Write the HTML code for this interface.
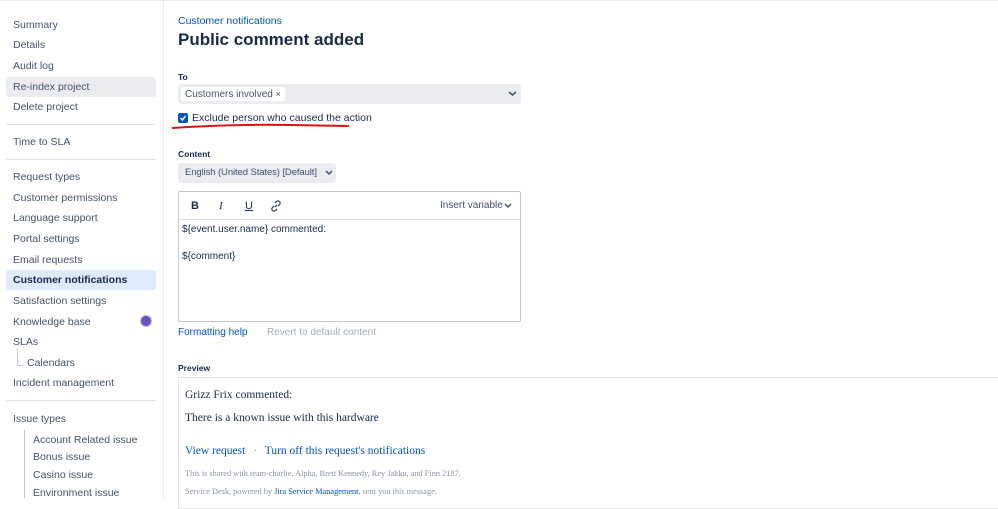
<!DOCTYPE html><html><head><style>
body{margin:0;width:998px;height:498px;overflow:hidden;background:#fff;font-family:"Liberation Sans",sans-serif;color:#42526e;position:relative}
.a{position:absolute;white-space:nowrap}
.nav{font-size:10.5px;color:#42526e;left:13px}
.sel{position:absolute;left:6px;width:150px;height:20px;border-radius:3px}
.hr{position:absolute;left:6px;width:150px;height:1px;background:#dfe1e6}
.lbl{font-size:8.5px;font-weight:bold;color:#172b4d}
.ser{font-family:"Liberation Serif",serif;color:#172b4d}
</style></head><body>
<div style="position:absolute;left:163px;top:0;width:1px;height:498px;background:#ebecf0"></div>
<div style="position:absolute;left:0;top:0;width:998px;height:1px;background:#ebecf0"></div>
<div class="sel" style="top:77px;background:#ebecf0"></div>
<div class="sel" style="top:270px;background:#deebff"></div>
<div class="a nav" style="top:19px">Summary</div>
<div class="a nav" style="top:39px">Details</div>
<div class="a nav" style="top:60px">Audit log</div>
<div class="a nav" style="top:81px">Re-index project</div>
<div class="a nav" style="top:101px">Delete project</div>
<div class="hr" style="top:124px"></div>
<div class="a nav" style="top:136px">Time to SLA</div>
<div class="hr" style="top:159px"></div>
<div class="a nav" style="top:171px">Request types</div>
<div class="a nav" style="top:192px">Customer permissions</div>
<div class="a nav" style="top:212px">Language support</div>
<div class="a nav" style="top:233px">Portal settings</div>
<div class="a nav" style="top:254px">Email requests</div>
<div class="a nav" style="top:274px;font-weight:bold;color:#172b4d">Customer notifications</div>
<div class="a nav" style="top:295px">Satisfaction settings</div>
<div class="a nav" style="top:316px">Knowledge base</div>
<div class="a" style="left:141px;top:316px;width:10px;height:10px;border-radius:50%;background:#6554c0;box-shadow:0 0 0 1px #c0b6f2"></div>
<div class="a nav" style="top:336px">SLAs</div>
<div class="a" style="left:17px;top:349px;width:5px;height:16px;border-left:1px solid #c1c7d0;border-bottom:1px solid #c1c7d0"></div>
<div class="a nav" style="top:357px;left:27px">Calendars</div>
<div class="a nav" style="top:377px">Incident management</div>
<div class="hr" style="top:400px"></div>
<div class="a nav" style="top:413px">Issue types</div>
<div class="a" style="left:24px;top:430px;width:1px;height:68px;background:#c1c7d0"></div>
<div class="a nav" style="top:434px;left:33px">Account Related issue</div>
<div class="a nav" style="top:451px;left:33px">Bonus issue</div>
<div class="a nav" style="top:469px;left:33px">Casino issue</div>
<div class="a nav" style="top:487px;left:33px">Environment issue</div>

<div class="a" style="left:178px;top:15px;font-size:10.5px;color:#0052cc">Customer notifications</div>
<div class="a" style="left:178px;top:30px;font-size:17px;color:#172b4d;font-weight:bold">Public comment added</div>
<div class="a lbl" style="left:178px;top:72px">To</div>
<div class="a" style="left:178px;top:84px;width:343px;height:20px;background:#ebecf0;border-radius:3px"></div>
<div class="a" style="left:181px;top:87px;height:14px;padding:0 4px;background:#fff;border-radius:2px;font-size:10px;line-height:14px;color:#42526e">Customers involved <span style="font-size:9px">×</span></div>
<svg class="a" style="left:508px;top:90px" width="9" height="7"><path d="M1 2l3.5 3L8 2" stroke="#42526e" stroke-width="1.6" fill="none"/></svg>
<div class="a" style="left:178px;top:113px;width:10px;height:10px;background:#0052cc;border-radius:2px"></div>
<svg class="a" style="left:178px;top:113px" width="10" height="10"><path d="M2.5 5l2 2 3-4" stroke="#fff" stroke-width="1.5" fill="none"/></svg>
<div class="a" style="left:192px;top:112px;font-size:10.5px;color:#172b4d">Exclude person who caused the action</div>
<svg class="a" style="left:170px;top:122px" width="190" height="10"><path d="M2 6 Q60 2 120 3 T178 4" stroke="#e01010" stroke-width="2" fill="none"/></svg>
<div class="a lbl" style="left:178px;top:149px">Content</div>
<div class="a" style="left:178px;top:163px;width:158px;height:20px;background:#ebecf0;border-radius:3px;font-size:9.5px;line-height:20px;color:#42526e;letter-spacing:-0.1px"><span style="margin-left:7px">English (United States) [Default]</span></div>
<svg class="a" style="left:325px;top:170px" width="8" height="6"><path d="M1 1l3 3 3-3" stroke="#42526e" stroke-width="1.5" fill="none"/></svg>
<div class="a" style="left:178px;top:191px;width:341px;height:129px;border:1px solid #c1c7d0;border-radius:2px"></div>
<div class="a" style="left:179px;top:219px;width:341px;height:1px;background:#dfe1e6"></div>
<div class="a" style="left:191px;top:200px;font-size:11px;font-weight:bold;color:#172b4d">B</div>
<div class="a" style="left:219px;top:200px;font-size:11px;font-style:italic;color:#172b4d;font-family:'Liberation Serif',serif">I</div>
<div class="a" style="left:245px;top:200px;font-size:11px;text-decoration:underline;color:#172b4d">U</div>
<svg class="a" style="left:270px;top:200px" width="12" height="12"><path d="M5 7l2-2M4 6L2.5 7.5a2 2 0 003 3L7 9M8 6l1.5-1.5a2 2 0 00-3-3L5 3" stroke="#42526e" stroke-width="1.3" fill="none"/></svg>
<div class="a" style="left:440px;top:200px;font-size:10px;color:#42526e">Insert variable</div>
<svg class="a" style="left:504px;top:203px" width="8" height="6"><path d="M1 1l3 3 3-3" stroke="#42526e" stroke-width="1.5" fill="none"/></svg>
<div class="a" style="left:182px;top:224px;font-size:10px;color:#172b4d">${event.user.name} commented:</div>
<div class="a" style="left:182px;top:251px;font-size:10px;color:#172b4d">${comment}</div>
<div class="a" style="left:178px;top:327px;font-size:10px;color:#0052cc">Formatting help</div>
<div class="a" style="left:267px;top:327px;font-size:10px;color:#a5adba">Revert to default content</div>
<div class="a lbl" style="left:178px;top:363px">Preview</div>
<div class="a" style="left:178px;top:377px;width:830px;height:130px;border:1px solid #dfe1e6"></div>
<div class="a ser" style="left:185px;top:389px;font-size:11.5px">Grizz Frix commented:</div>
<div class="a ser" style="left:185px;top:412px;font-size:11.5px">There is a known issue with this hardware</div>
<div class="a ser" style="left:185px;top:445px;font-size:11.5px;color:#0052cc">View request <span style="color:#999;margin:0 5px">·</span> Turn off this request's notifications</div>
<div class="a ser" style="left:185px;top:469px;font-size:8.3px;color:#8993a4">This is shared with team-charlie, Alpha, Brett Kennedy, Rey Jakku, and Finn 2187.</div>
<div class="a ser" style="left:185px;top:487px;font-size:8.3px;color:#8993a4">Service Desk, powered by <span style="color:#0052cc">Jira Service Management</span>, sent you this message.</div>
</body></html>
